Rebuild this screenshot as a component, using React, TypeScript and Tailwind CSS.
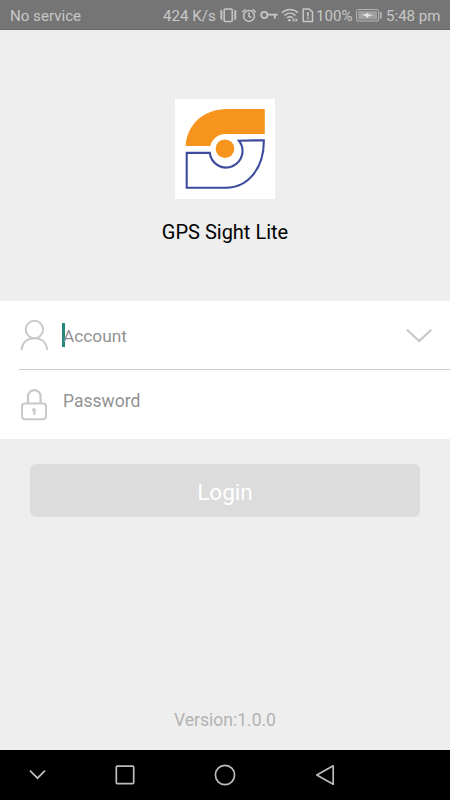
const VibrateIcon = () => (
  <svg width="19" height="30" viewBox="0 0 19 30" fill="none" stroke="#c8c8c8" strokeWidth="1.5">
    <rect x="5.2" y="9.1" width="8" height="12.4" rx="1" />
    <path d="M3 10.3l-1.2 1.2L3 12.9l-1.2 1.4L3 15.7l-1.2 1.4L3 18.5l-1 1.4M15.6 10.3l1.2 1.2-1.2 1.4 1.2 1.4-1.2 1.4 1.2 1.4-1.2 1.4 1 1.4" />
  </svg>
)

const AlarmIcon = () => (
  <svg width="16" height="30" viewBox="0 0 16 30" fill="none" stroke="#c8c8c8" strokeWidth="1.5">
    <circle cx="8" cy="16" r="5.4" />
    <path d="M8 12.5v3.8l2.4 1.4M1.2 12.2l3.3-3M14.8 12.2l-3.3-3" />
  </svg>
)

const KeyIcon = () => (
  <svg width="18" height="30" viewBox="0 0 18 30" fill="none" stroke="#c8c8c8" strokeWidth="1.8">
    <circle cx="4.3" cy="15" r="3.1" />
    <path d="M7.4 14.6H17.6M14.8 14.6v3.8" />
  </svg>
)

const WifiIcon = () => (
  <svg width="18" height="30" viewBox="0 0 18 30" fill="none" stroke="#c8c8c8" strokeWidth="1.6">
    <path d="M1 12.8C5.6 8.3 12.4 8.3 17 12.8M3.5 15.5c3.3-3 7.7-3 11 0M6 18c1.8-1.5 4.2-1.5 6 0" />
    <circle cx="8.4" cy="20.3" r="1.2" fill="#c8c8c8" stroke="none" />
    <path d="M13.4 17.9L11.1 19.9l2.3 2zM14.6 17.9l2.3 2-2.3 2z" fill="#c8c8c8" stroke="none" />
  </svg>
)

const SimIcon = () => (
  <svg width="12" height="30" viewBox="0 0 12 30" fill="none" stroke="#c8c8c8" strokeWidth="1.5">
    <path d="M1.2 8.9h5.8l3.5 3v9.7H1.2z" strokeLinejoin="round" />
    <path d="M5.9 12v4.4M5.9 17.6v1.7" strokeWidth="1.6" />
  </svg>
)

const BatteryIcon = () => (
  <svg width="26" height="30" viewBox="0 0 26 30" fill="none">
    <rect x="0.6" y="9.6" width="22" height="11.4" rx="1" stroke="#b8b8b8" />
    <rect x="2.2" y="11.2" width="18.8" height="8.2" fill="#a0a0a0" />
    <path d="M5.5 14.8l4.7-.7 1-1.7 1.8 1.9 4.7 1-4.8.7-1.5 1.9-1.7-2z" fill="#e6e6e6" />
    <path d="M24.8 12v6.6" stroke="#c0c0c0" strokeWidth="1.5" />
  </svg>
)

const Logo = () => (
  <svg className="bg-white" width="100" height="100" viewBox="0 0 100 100" fill="none">
    <path d="M10.6 47C12 25 29 10 52 10h37.8v25H51c-8 0-13.5 4.5-15.8 12z" fill="#f7941e" />
    <circle cx="50" cy="49.7" r="9.3" fill="#f7941e" />
    <path d="M11.7 53.9h23.1A16.4 16.4 0 1 0 63.8 41.7L88.8 41.2C89.4 69 73 88.7 51 88.7H11.7z" stroke="#3c4b9c" strokeWidth="2.1" />
  </svg>
)

const UserIcon = () => (
  <svg width="28" height="32" viewBox="0 0 28 32" fill="none" stroke="#c9c9c9" strokeWidth="2">
    <circle cx="14.4" cy="10.5" r="8.7" />
    <path d="M1.5 31C2.3 23.4 7.4 19.2 14.4 19.2S26.6 23.4 27.3 31" />
  </svg>
)

const LockIcon = () => (
  <svg className="mb-[2px]" width="28" height="34" viewBox="0 0 28 34" fill="none" stroke="#c9c9c9" strokeWidth="2">
    <rect x="2" y="16.4" width="24" height="15.8" rx="3" />
    <path d="M8 16V9.5a6.3 6.3 0 0 1 12.6 0V16" strokeWidth="2.3" />
    <circle cx="14" cy="22.9" r="1.9" fill="#c9c9c9" stroke="none" />
    <path d="M14.3 23v5" />
  </svg>
)

export default function App() {
  return (
    <div className="flex h-[800px] w-[450px] flex-col overflow-hidden bg-[#eeeeee] font-['Roboto',sans-serif]">
      <header className="flex h-[30px] shrink-0 items-center border-b border-[#696969] bg-[#757575] pl-[10px] text-[15.1px] text-[#c8c8c8]">
        <span className="w-[153px] whitespace-nowrap pt-[3px]">No service</span>
        <span className="w-[56px] whitespace-nowrap pt-[3px]">424 K/s</span>
        <div className="flex w-[97px] shrink-0 gap-[3px]">
          <VibrateIcon />
          <AlarmIcon />
          <KeyIcon />
          <WifiIcon />
          <SimIcon />
        </div>
        <span className="w-[40px] whitespace-nowrap pt-[3px]">100%</span>
        <BatteryIcon />
        <span className="whitespace-nowrap pl-[4px] pt-[3px]">5:48 pm</span>
      </header>

      <section className="flex h-[271px] shrink-0 flex-col items-center pt-[69px]">
        <Logo />
        <h1 className="mt-[18px] text-[20px] leading-[30px] text-black">GPS Sight Lite</h1>
      </section>

      <section className="h-[138px] shrink-0 bg-white">
        <div className="flex h-[68px] items-center pl-[20px]">
          <UserIcon />
          <div className="relative ml-[15px] flex-1 pt-[2px] text-[17.3px] leading-[24px] text-[#929292]">
            <span className="absolute top-px -left-px h-[24px] w-[3px] bg-[#26897c]" />
            <span className="relative">Account</span>
          </div>
          <svg className="mr-[17px]" width="28" height="16" viewBox="0 0 28 16" fill="none" stroke="#c8c8c8" strokeWidth="2.2">
            <path d="M2 2.8l12.2 11.2L26.2 2.8" />
          </svg>
        </div>
        <div className="ml-[19px] h-px bg-[#cccccc]" />
        <div className="flex h-[69px] items-center pl-[20px]">
          <LockIcon />
          <span className="ml-[15px] pb-[7px] text-[17.5px] leading-[24px] text-[#929292]">Password</span>
        </div>
      </section>

      <div className="px-[30px] pt-[25px]">
        <button className="h-[53px] w-full rounded-[6px] bg-[#dcdcdc] pt-[4px] text-[22.5px] text-white">Login</button>
      </div>
      <p className="mt-auto pb-[18px] text-center text-[17.5px] leading-[24px] text-[#b3b3b3]">Version:1.0.0</p>

      <nav className="flex h-[50px] shrink-0 bg-black pr-[75px]">
        <svg width="75" height="50" viewBox="0 0 75 50" fill="none" stroke="#bdbdbd" strokeWidth="1.7">
          <path d="M30 20.7l7.5 7.5 7.5-7.5" />
        </svg>
        <svg width="100" height="50" viewBox="0 0 100 50" fill="none" stroke="#bdbdbd" strokeWidth="1.7">
          <rect x="41.3" y="16.2" width="17.4" height="17.4" rx="1" />
        </svg>
        <svg width="100" height="50" viewBox="0 0 100 50" fill="none" stroke="#bdbdbd" strokeWidth="1.7">
          <circle cx="50" cy="25" r="9.6" />
        </svg>
        <svg width="100" height="50" viewBox="0 0 100 50" fill="none" stroke="#bdbdbd" strokeWidth="1.7">
          <path d="M58.2 15.8v18.4L41.8 25z" strokeLinejoin="round" />
        </svg>
      </nav>
    </div>
  )
}
